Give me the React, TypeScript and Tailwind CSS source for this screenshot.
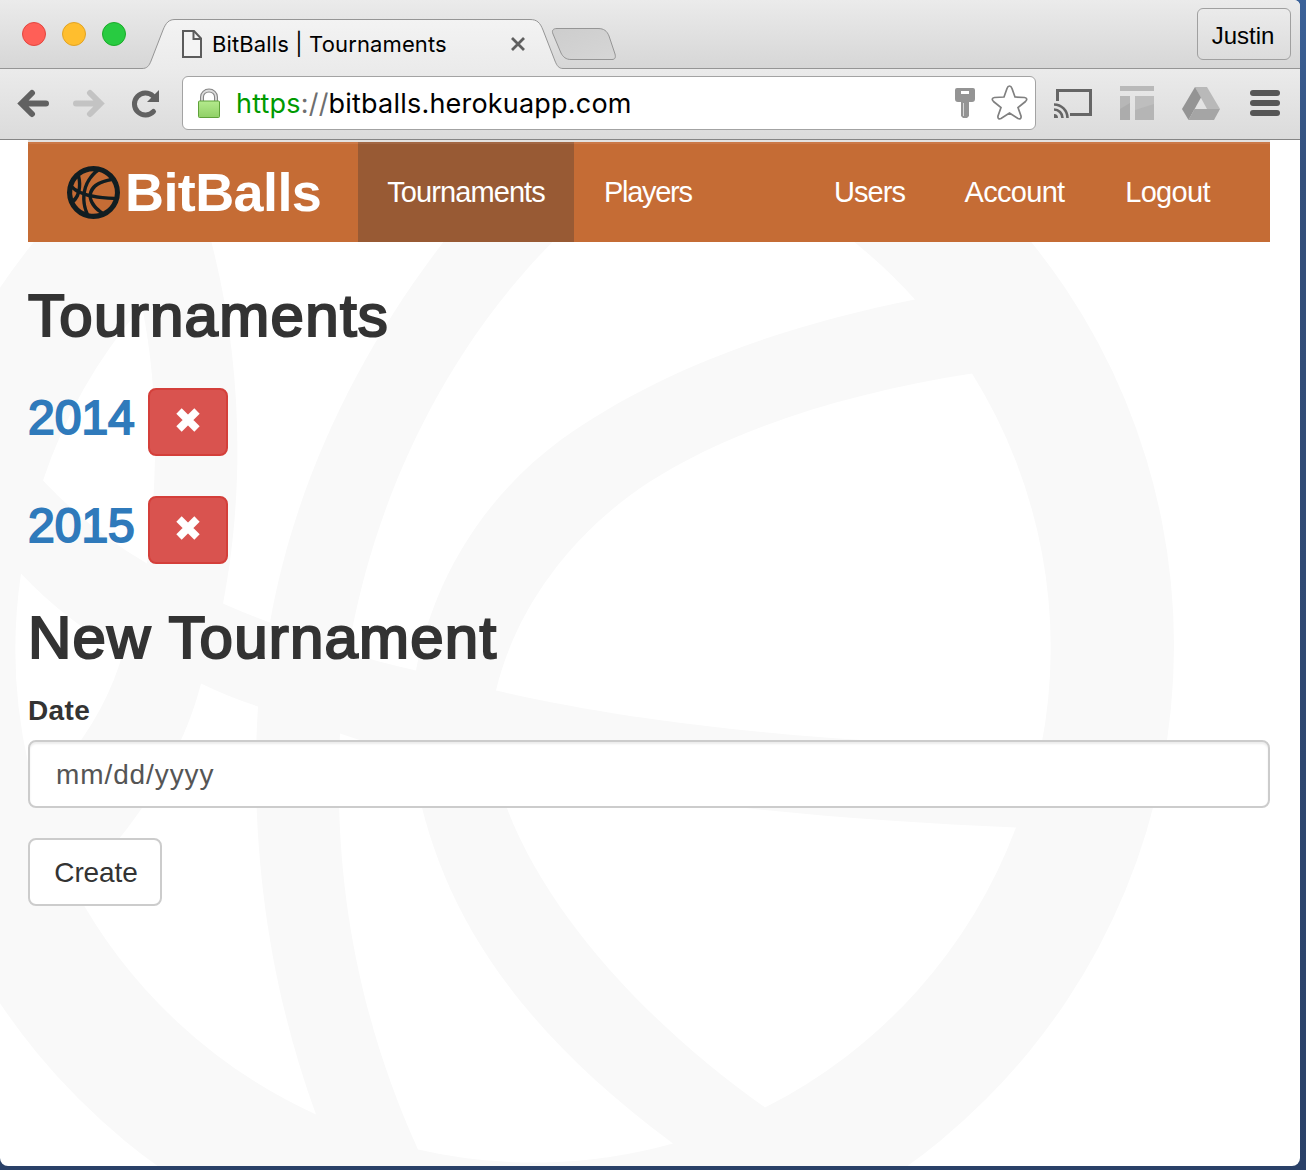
import React from "react";

const BALL_PATH = [
  "M532.5 3.5a641.5 641.5 0 1 0 0 1283a641.5 641.5 0 1 0 0-1283Z",
  "M43 480A517 517 0 0 1 142 306C159 390 158 480 147 563Q90 530 43 480Z",
  "M211 240A517 517 0 0 1 538 128Q485 180 443 242C360 350 295 480 270 622Q245 613 223 603C243 500 245 370 211 240Z",
  "M663 145A517 517 0 0 1 915 299C785 325 660 368 560 440C482 498 433 580 416 670Q380 662 348 652C375 490 450 345 552 242Q605 187 663 145Z",
  "M972 373A517 517 0 0 1 1041 747C850 744 650 726 496 690C515 610 570 533 650 481C735 427 850 392 972 373Z",
  "M1016 827A517 517 0 0 1 765 1107C635 1015 525 890 495 770C660 803 840 820 1016 827Z",
  "M673 1143A517 517 0 0 1 418 1149C355 1010 333 870 340 733L412 757C432 890 500 1015 673 1143Z",
  "M316 1114A517 517 0 0 1 75 889C130 830 180 765 201 683Q230 697 258 706C250 830 265 975 316 1114Z",
  "M36 793A517 517 0 0 1 21 573Q65 620 123 652C110 700 80 750 36 793Z",
].join("");

function Ball({ className }: { className: string }) {
  return (
    <svg className={className} viewBox="-109 3.5 1283 1283" aria-hidden="true">
      <path d={BALL_PATH} fill="currentColor" fillRule="evenodd" />
    </svg>
  );
}

function TabShapes() {
  return (
    <svg className="absolute left-0 top-0" width="1300" height="70" viewBox="0 0 1300 70" aria-hidden="true">
      <defs>
        <linearGradient id="tab" x1="0" y1="0" x2="0" y2="1">
          <stop offset="0" stopColor="#f3f3f3" />
          <stop offset="1" stopColor="#ebebeb" />
        </linearGradient>
        <linearGradient id="newtab" x1="0" y1="0" x2="1" y2="1">
          <stop offset="0" stopColor="#cdcdcd" />
          <stop offset="1" stopColor="#d6d6d6" />
        </linearGradient>
      </defs>
      <path
        d="M0 70V68.500H142C147 68.500 149 66 151 61L163 30C166 22.500 169 19.500 175 19.500H530C537 19.500 540 22.500 543 30L555 61C557 66 559 68.500 563 68.500H1300V70Z"
        fill="url(#tab)"
      />
      <path
        d="M0 68.500H142C147 68.500 149 66 151 61L163 30C166 22.500 169 19.500 175 19.500H530C537 19.500 540 22.500 543 30L555 61C557 66 559 68.500 563 68.500H1300"
        fill="none"
        stroke="#959595"
      />
      <path
        d="M557 28.500H598C604 28.500 607 31 609 36L615 54C616 57.500 615 59.500 612 59.500H571C566 59.500 563 57 561 53L553 34C551.500 30.500 553 28.500 557 28.500Z"
        fill="url(#newtab)"
        stroke="#959595"
      />
    </svg>
  );
}

function TitleBar() {
  return (
    <div className="relative h-[69px] bg-linear-to-b from-[#ebebeb] to-[#d6d6d6]">
      <TabShapes />
      <div className="relative flex h-full items-start">
        <div className="ml-[22px] mt-[22px] flex gap-4">
          <span className="size-6 rounded-full border border-[#e2463f] bg-[#ff5f57]" />
          <span className="size-6 rounded-full border border-[#e1a325] bg-[#ffbe2e]" />
          <span className="size-6 rounded-full border border-[#1bab29] bg-[#28cb41]" />
        </div>
        <svg className="ml-14 mt-[30px]" width="20" height="28" viewBox="0 0 20 28" fill="none" stroke="#5c5c5c" strokeWidth="2">
          <path d="M1 1H12L19 8.500V27H1Z" fill="#f4f4f4" />
          <path d="M11.500 1V9H19" />
        </svg>
        <span className="ml-[10px] mt-[30px] w-[236px] whitespace-nowrap font-['Inter'] text-[22px] leading-7 tracking-[0.13px] text-black">
          BitBalls | Tournaments
        </span>
        <svg className="ml-[62px] mt-[37px]" width="16" height="14" viewBox="0 0 16 14" stroke="#5f5f5f" strokeWidth="2.800">
          <path d="M2 1L14 13M14 1L2 13" />
        </svg>
        <div className="ml-auto mr-[9px] mt-2 flex h-[52px] w-[94px] items-center justify-center rounded-md border border-[#a0a0a0] bg-linear-to-b from-[#ebebeb] to-[#dcdcdc] pr-0.5 pt-1 font-['Liberation_Sans'] text-2xl text-black">
          Justin
        </div>
      </div>
    </div>
  );
}

function Toolbar() {
  return (
    <div className="flex h-[71px] items-start border-b border-[#858585] bg-linear-to-b from-[#ebebeb] to-[#dbdbdb]">
      <svg className="ml-[17px] mt-[20px]" width="33" height="29" viewBox="17 89 33 29" fill="none" stroke="#616161" strokeWidth="6">
        <path d="M22 103.500H46M32 93L21.500 103.500L32 114" strokeLinecap="round" />
      </svg>
      <svg className="ml-[22px] mt-[20px]" width="33" height="29" viewBox="72 89 33 29" fill="none" stroke="#c3c3c3" strokeWidth="6">
        <path d="M76 103.500H100M90 93L100.500 103.500L90 114" strokeLinecap="round" />
      </svg>
      <svg className="ml-[26px] mt-[20px]" width="30" height="29" viewBox="131 89 30 29">
        <path d="M153.500 111.500A11 11 0 1 1 153 96" fill="none" stroke="#616161" strokeWidth="5" strokeLinecap="round" />
        <path d="M159 90V102H147Z" fill="#616161" />
      </svg>
      <div className="ml-[21px] mt-[7px] flex h-[54px] w-[854px] rounded-md border border-[#a3a3a3] bg-white">
        <svg className="ml-[14px] mt-[11px]" width="24" height="31" viewBox="197 88 24 31">
          <defs>
            <linearGradient id="lock" x1="0" y1="0" x2="0" y2="1">
              <stop offset="0" stopColor="#b4ea8d" />
              <stop offset="1" stopColor="#90d066" />
            </linearGradient>
          </defs>
          <path d="M202 102V97a7 6.500 0 0 1 14 0V102" fill="none" stroke="#858585" strokeWidth="4" />
          <path d="M202 102V97a7 6.500 0 0 1 14 0V102" fill="none" stroke="#dcdcdc" strokeWidth="1.800" />
          <rect x="198.500" y="101" width="21" height="16.500" rx="1" fill="url(#lock)" stroke="#5fa13a" />
        </svg>
        <span className="ml-[15px] w-[420px] whitespace-nowrap pt-[9px] font-['Inter'] text-[27px] leading-9 tracking-[0.2px] text-black">
          <span className="text-[#009a00]">https</span>
          <span className="text-[#6e6e6e]">://</span>bitballs.herokuapp.com
        </span>
        <svg className="ml-auto mt-[11px]" width="20" height="31" viewBox="955 88 20 31" fill="#949494">
          <path
            d="M957 88H973Q975 88 975 90V99Q975 102 972 102H969V116L967 118H963L961 116V102H958Q955 102 955 99V90Q955 88 957 88ZM961 91V94H969V91Z"
            fillRule="evenodd"
          />
          <path d="M963.500 103V116" stroke="#d8d8d8" />
        </svg>
        <svg className="ml-4 mr-[7px] mt-[8px]" width="37" height="36" viewBox="991 85 37 36">
          <path
            d="M1009.500 86C1011 86 1011.500 87 1012 88.500L1015 97L1024.500 97.500C1027 98 1027.500 99.500 1025.500 101.500L1018 107.500L1021 116C1021.500 118.500 1020 119.500 1018 118.500L1009.500 113L1001 118.500C999 119.500 997.500 118.500 998 116L1001 107.500L993.500 101.500C991.500 99.500 992 98 994.500 97.500L1004 97L1007 88.500C1007.500 87 1008 86 1009.500 86Z"
            fill="none"
            stroke="#808080"
            strokeWidth="1.700"
          />
        </svg>
      </div>
      <svg className="ml-[18px] mt-[20px]" width="39" height="30" viewBox="1054 89 39 30" fill="none" stroke="#666">
        <path d="M1057.500 101V90.500H1090.500V114.500H1070" strokeWidth="3" />
        <path d="M1054 104.500A13.500 13.500 0 0 1 1067.500 118M1054 109.500A8.500 8.500 0 0 1 1062.500 118" strokeWidth="2.600" />
        <path d="M1054 114A4 4 0 0 1 1058 118H1054Z" fill="#666" stroke="none" />
      </svg>
      <svg className="ml-[27px] mt-[17px]" width="34" height="34" viewBox="0 0 34 34">
        <path d="M0 0H34V5H0Z" fill="#b9b9b9" />
        <path d="M0 10H10V34H0Z" fill="#b7b7b7" />
        <path d="M0 23L10 17V34H0Z" fill="#acacac" />
        <path d="M15 10H34V34H15Z" fill="#b5b5b5" />
        <path d="M15 10H34V18L15 24Z" fill="#bebebe" />
      </svg>
      <svg className="ml-7 mt-[18px]" width="38" height="33" viewBox="0 0 38 33">
        <path d="M13 0H25L38 22H25Z" fill="#b9b9b9" />
        <path d="M13 0L19 10.500L6.500 33L0 22Z" fill="#949494" />
        <path d="M12.500 22H38L32 33H6.500Z" fill="#a5a5a5" />
      </svg>
      <div className="ml-[30px] mt-[21px] flex w-[30px] flex-col gap-1">
        <span className="h-1.5 rounded-full bg-[#565656]" />
        <span className="h-1.5 rounded-full bg-[#565656]" />
        <span className="h-1.5 rounded-full bg-[#565656]" />
      </div>
    </div>
  );
}

function NavBar() {
  return (
    <nav className="mx-[28px] mr-[30px] flex h-[102px] border-t-2 border-[#e4e2e0] bg-[#c56c35] text-[29px] tracking-[-0.9px] text-white shadow-[inset_0_2px_0_#cb7948]">
      <a className="flex w-[330px] items-center pl-[39px]">
        <Ball className="size-[53px] text-[#111d21]" />
        <span className="ml-[5px] text-[54px] font-bold leading-none tracking-[-0.6px]">BitBalls</span>
      </a>
      <a className="flex w-[216px] items-center justify-center bg-[#985a34] pt-0.5 shadow-[inset_0_2px_0_#a26744]">Tournaments</a>
      <a className="flex items-center pl-[30px] pt-0.5 tracking-[-1.3px]">Players</a>
      <div className="ml-auto mr-[30px] flex pt-0.5">
        <a className="flex w-[129px] items-center justify-center">Users</a>
        <a className="flex w-[161px] items-center justify-center tracking-[-0.7px]">Account</a>
        <a className="flex w-[145px] items-center justify-center tracking-[-0.7px]">Logout</a>
      </div>
    </nav>
  );
}

function Tournament({ year }: { year: string }) {
  return (
    <div className="flex h-[68px] items-start">
      <a className="w-[120px] text-5xl leading-[60px] text-[#2f7abb] [-webkit-text-stroke:2px_#2f7abb]">{year}</a>
      <button className="flex h-[68px] w-20 justify-center rounded-lg border-2 border-[#d43f3a] bg-[#d9534f] pt-[18px]">
        <svg width="24" height="24" viewBox="0 0 24 24" stroke="#fff" strokeWidth="7.600">
          <path d="M3 3L21 21M21 3L3 21" />
        </svg>
      </button>
    </div>
  );
}

export default function App() {
  return (
    <div className="h-[1170px] w-[1306px] overflow-hidden bg-linear-to-b from-[#3b6299] via-[#34507c] via-15% to-[#2a4168]">
      <div className="relative isolate h-[1166px] w-[1300px] overflow-hidden rounded-b-lg rounded-tr-md bg-white font-['Liberation_Sans',sans-serif] text-[#333]">
        <Ball className="absolute left-[-109px] top-[3.5px] -z-10 size-[1283px] text-[#f9f9f9]" />
        <TitleBar />
        <Toolbar />
        <NavBar />
        <main className="ml-[28px] mr-[30px]">
          <h2 className="mt-[41px] text-[60px] leading-[66px] tracking-[1.3px] [-webkit-text-stroke:2.2px_#333]">Tournaments</h2>
          <div className="mt-[39px] flex flex-col gap-10">
            <Tournament year="2014" />
            <Tournament year="2015" />
          </div>
          <h2 className="mt-[41px] text-[60px] leading-[66px] tracking-[1.2px] [-webkit-text-stroke:2.2px_#333]">New Tournament</h2>
          <label className="mt-5 block text-[28px] font-bold leading-10 tracking-[0.4px]">Date</label>
          <div className="mt-[9px] flex h-[68px] items-center rounded-lg border-2 border-[#ccc] bg-white pl-[26px] pt-0.5 text-[28px] tracking-[0.9px] text-[#555] shadow-[inset_0_2px_2px_rgba(0,0,0,0.075)]">
            mm/dd/yyyy
          </div>
          <button className="mt-[30px] flex h-[68px] w-[134px] items-center justify-center rounded-lg border-2 border-[#ccc] bg-white pl-0.5 pt-0.5 text-[28px] tracking-[-0.1px]">
            Create
          </button>
        </main>
      </div>
    </div>
  );
}
